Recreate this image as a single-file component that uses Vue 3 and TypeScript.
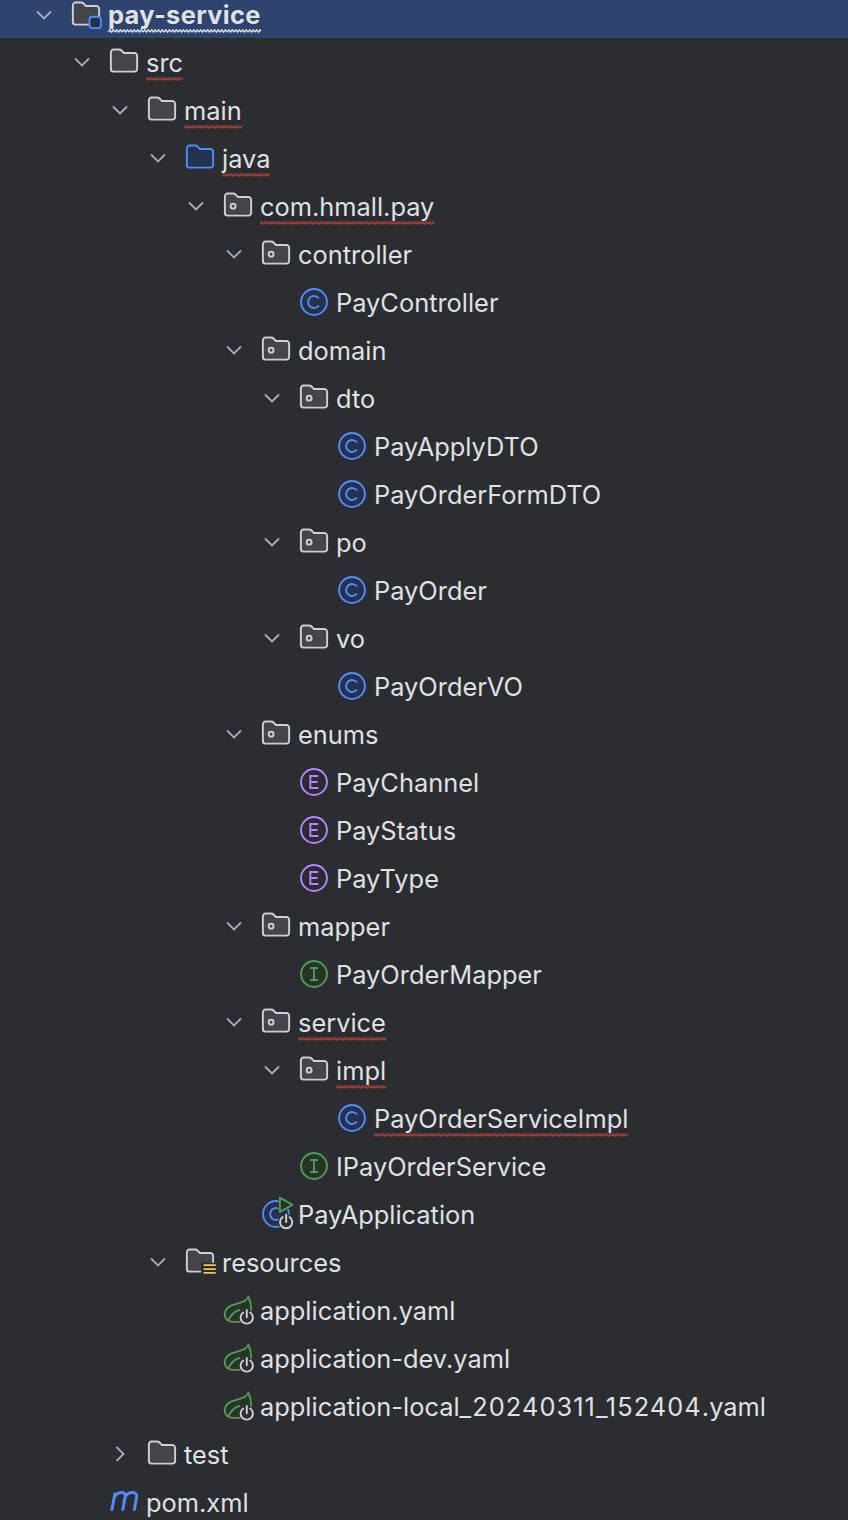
<script setup lang="ts">
type Kind = 'module' | 'folder' | 'source' | 'package' | 'resources' | 'class' | 'enum' | 'iface' | 'app' | 'spring' | 'maven'

interface Row {
  name: string
  depth: number
  kind: Kind
  arrow?: 'open' | 'closed'
  typo?: boolean
}

const rows: Row[] = [
  { name: 'pay-service', depth: 0, kind: 'module', arrow: 'open', typo: true },
  { name: 'src', depth: 1, kind: 'folder', arrow: 'open', typo: true },
  { name: 'main', depth: 2, kind: 'folder', arrow: 'open', typo: true },
  { name: 'java', depth: 3, kind: 'source', arrow: 'open', typo: true },
  { name: 'com.hmall.pay', depth: 4, kind: 'package', arrow: 'open', typo: true },
  { name: 'controller', depth: 5, kind: 'package', arrow: 'open' },
  { name: 'PayController', depth: 6, kind: 'class' },
  { name: 'domain', depth: 5, kind: 'package', arrow: 'open' },
  { name: 'dto', depth: 6, kind: 'package', arrow: 'open' },
  { name: 'PayApplyDTO', depth: 7, kind: 'class' },
  { name: 'PayOrderFormDTO', depth: 7, kind: 'class' },
  { name: 'po', depth: 6, kind: 'package', arrow: 'open' },
  { name: 'PayOrder', depth: 7, kind: 'class' },
  { name: 'vo', depth: 6, kind: 'package', arrow: 'open' },
  { name: 'PayOrderVO', depth: 7, kind: 'class' },
  { name: 'enums', depth: 5, kind: 'package', arrow: 'open' },
  { name: 'PayChannel', depth: 6, kind: 'enum' },
  { name: 'PayStatus', depth: 6, kind: 'enum' },
  { name: 'PayType', depth: 6, kind: 'enum' },
  { name: 'mapper', depth: 5, kind: 'package', arrow: 'open' },
  { name: 'PayOrderMapper', depth: 6, kind: 'iface' },
  { name: 'service', depth: 5, kind: 'package', arrow: 'open', typo: true },
  { name: 'impl', depth: 6, kind: 'package', arrow: 'open', typo: true },
  { name: 'PayOrderServiceImpl', depth: 7, kind: 'class', typo: true },
  { name: 'IPayOrderService', depth: 6, kind: 'iface' },
  { name: 'PayApplication', depth: 5, kind: 'app' },
  { name: 'resources', depth: 3, kind: 'resources', arrow: 'open' },
  { name: 'application.yaml', depth: 4, kind: 'spring' },
  { name: 'application-dev.yaml', depth: 4, kind: 'spring' },
  { name: 'application-local_20240311_152404.yaml', depth: 4, kind: 'spring' },
  { name: 'test', depth: 2, kind: 'folder', arrow: 'closed' },
  { name: 'pom.xml', depth: 1, kind: 'maven' },
]

const folderPath =
  'M2 .9H5.4Q6 .9 6.4 1.3L8 2.9H14A1.5 1.5 0 0 1 15.5 4.4V12A1.5 1.5 0 0 1 14 13.5H2A1.5 1.5 0 0 1 .5 12V2.4A1.5 1.5 0 0 1 2 .9Z'

function isFolder(kind: Kind) {
  return kind === 'module' || kind === 'folder' || kind === 'package' || kind === 'resources'
}

// the digit runs in file names are set wider than plain Inter
function nameParts(name: string) {
  return name.split(/(_[\d_]+)/).filter(Boolean)
}

function isNumeric(part: string) {
  return /^_\d/.test(part)
}
</script>

<template>
  <div class="tree">
    <div
      v-for="(row, i) in rows"
      :key="row.name"
      class="row"
      :class="{ selected: i === 0 }"
      :style="{ paddingLeft: 30 + row.depth * 38 + 'px' }"
    >
      <svg class="arrow" viewBox="0 0 28 28">
        <path v-if="row.arrow === 'open'" d="M7 10.5l7 7 7-7" />
        <path v-else-if="row.arrow === 'closed'" d="M10.5 7l7 7-7 7" />
      </svg>

      <svg class="icon" viewBox="0 0 16 16">
        <template v-if="isFolder(row.kind)">
          <path :d="folderPath" class="folder" />
          <circle v-if="row.kind === 'package'" cx="5.2" cy="8.1" r="1.4" class="dot" />
          <template v-if="row.kind === 'module'">
            <rect x="9.6" y="8.5" width="7.4" height="7.4" rx="2" class="cutout-sel" />
            <rect x="10" y="9" width="6.5" height="6.5" rx="1.6" class="module-box" />
          </template>
          <template v-if="row.kind === 'resources'">
            <rect x="8.6" y="8.4" width="8" height="7.6" rx="1" class="cutout" />
            <path d="M10 9.8h7M10 12h7M10 14.2h7" class="yaml-lines" />
          </template>
        </template>

        <path v-else-if="row.kind === 'source'" :d="folderPath" class="folder blue" />

        <template v-else-if="row.kind === 'class'">
          <circle cx="8" cy="8" r="7.4" class="badge blue" />
          <path d="M10.8 6A3.4 3.4 0 1 0 10.8 10" class="letter blue-line" />
        </template>

        <template v-else-if="row.kind === 'enum'">
          <circle cx="8" cy="8" r="7.4" class="badge purple" />
          <path d="M10.5 4.6H5.9V11.4H10.5M5.9 8H10" class="letter purple-line" />
        </template>

        <template v-else-if="row.kind === 'iface'">
          <circle cx="8" cy="8" r="7.4" class="badge green" />
          <path d="M5.8 4.6H10.2M5.8 11.4H10.2M8 4.6V11.4" class="letter green-line" />
        </template>

        <template v-else-if="row.kind === 'app'">
          <circle cx="8" cy="8" r="7.4" class="badge blue" />
          <path d="M10.8 6A3.4 3.4 0 1 0 10.8 10" class="letter blue-line" />
          <path d="M10.2 -1.4L17.4 2.7L10.2 6.8Z" class="cutout thick" />
          <circle cx="13.8" cy="12.6" r="4.6" class="cutout-fill" />
          <path d="M10.2 -1.4L17.4 2.7L10.2 6.8Z" class="play" />
          <path d="M11.8 9.8A3.5 3.5 0 1 0 15.8 9.8M13.8 8.4V12.6" class="power" />
        </template>

        <template v-else-if="row.kind === 'spring'">
          <path
            d="M13.9.4C13 3 10 3.8 7 4.5C3 5.4.4 7.5.4 10.5C.4 13 2.5 14.8 5 14.8H10C13 14.4 15.2 11.5 15.4 8C15.6 5.5 15 3 13.9.4Z"
            class="leaf"
          />
          <path d="M2.4 14.2C3.6 11 6 8.8 9.2 7.8" class="leaf-vein" />
          <circle cx="13" cy="12.2" r="4.6" class="cutout-fill" />
          <path d="M11 9.4A3.5 3.5 0 1 0 15 9.4M13 8V12.2" class="power" />
        </template>

        <path
          v-else-if="row.kind === 'maven'"
          d="M.9 13L3 2.6M2.7 5C4.2 2.4 8.8 1.4 8.7 4.6L7.2 13M8.5 5C10 2.4 15.4 1.4 15.3 4.6L13.8 13"
          class="maven"
        />
      </svg>

      <span class="label" :class="{ typo: row.typo }"><template v-for="part in nameParts(row.name)" :key="part"><span v-if="isNumeric(part)" class="digits">{{ part }}</span><template v-else>{{ part }}</template></template></span>
    </div>
  </div>
</template>

<style scoped>
.tree {
  height: 1520px;
  overflow: hidden;
  background: #2b2d30;
  color: #dfe1e5;
  font-family: Inter, "Liberation Sans", sans-serif;
  font-size: 25.4px;
}

.row {
  display: flex;
  align-items: center;
  height: 48px;
  box-sizing: border-box;
}

.row:first-child {
  height: 38px;
  align-items: flex-start;
}

.row:first-child svg {
  margin-top: 1px;
}

.row:first-child .label {
  line-height: 30px;
}

.selected {
  background: #2e436e;
  font-weight: 700;
  letter-spacing: 0.35px;
}

.digits {
  letter-spacing: 1.05px;
}

.arrow {
  flex: none;
  width: 28px;
  height: 28px;
  margin-right: 14px;
  fill: none;
  stroke: #a8adbd;
  stroke-width: 1.8;
}

.icon {
  flex: none;
  width: 28px;
  height: 28px;
  margin-right: 8px;
  overflow: visible;
  fill: none;
  stroke-width: 1.1;
}

.folder {
  fill: #43454a;
  stroke: #ced0d6;
}

.folder.blue {
  fill: #25324d;
  stroke: #548af7;
}

.dot {
  stroke: #ced0d6;
}

.cutout-sel {
  fill: #2e436e;
}

.module-box {
  fill: #25324d;
  stroke: #548af7;
}

.cutout {
  fill: #2b2d30;
}

.cutout.thick {
  stroke: #2b2d30;
  stroke-width: 1.6;
}

.cutout-fill {
  fill: #2b2d30;
}

.yaml-lines {
  stroke: #f2c55c;
  stroke-width: 1;
}

.badge.blue {
  fill: #25324d;
  stroke: #548af7;
}

.badge.purple {
  fill: #2f2936;
  stroke: #b189f5;
}

.badge.green {
  fill: #253627;
  stroke: #57965c;
}

.blue-line {
  stroke: #548af7;
}

.purple-line {
  stroke: #b189f5;
}

.green-line {
  stroke: #57965c;
}

.play {
  fill: #253627;
  stroke: #57965c;
  stroke-linejoin: round;
}

.power {
  stroke: #ced0d6;
  stroke-linecap: round;
}

.leaf {
  fill: #253627;
  stroke: #57965c;
  stroke-linejoin: round;
}

.leaf-vein {
  stroke: #57965c;
}

.maven {
  stroke: #548af7;
  stroke-width: 1.7;
}

.label {
  position: relative;
  white-space: nowrap;
}

.typo::after {
  content: "";
  position: absolute;
  left: 0;
  right: 0;
  bottom: -3px;
  height: 4px;
  background: url("data:image/svg+xml,%3Csvg xmlns='http://www.w3.org/2000/svg' width='7' height='4'%3E%3Cpath d='M0 3.2L1.75 .8L3.5 3.2L5.25 .8L7 3.2' fill='none' stroke='%23b03c3c' stroke-width='1.4'/%3E%3C/svg%3E") repeat-x;
}

.selected .typo::after {
  background-image: url("data:image/svg+xml,%3Csvg xmlns='http://www.w3.org/2000/svg' width='7' height='4'%3E%3Cpath d='M0 3.2L1.75 .8L3.5 3.2L5.25 .8L7 3.2' fill='none' stroke='%23dfe1e5' stroke-width='1.4'/%3E%3C/svg%3E");
}
</style>

<style>
html,
body {
  margin: 0;
  background: #2b2d30;
}
</style>
